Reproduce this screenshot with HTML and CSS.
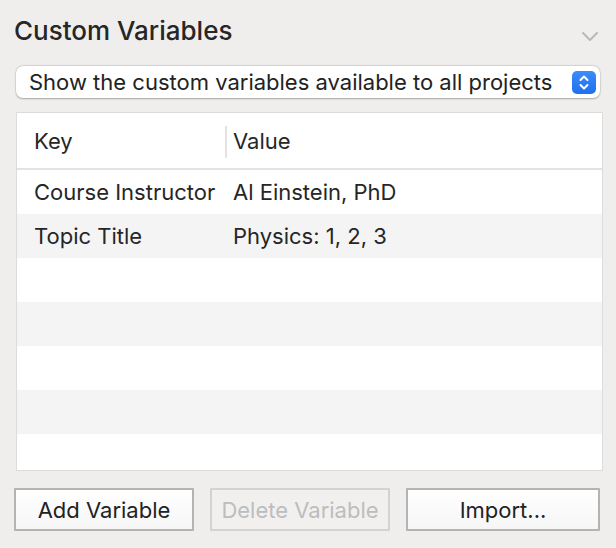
FILE: index.html
```html
<!DOCTYPE html>
<html>
<head>
<meta charset="utf-8">
<link rel="stylesheet" href="styles.css">
</head>
<body>
<div class="panel">
  <div class="head">
    <h1 class="title">Custom Variables</h1>
    <svg class="chev" width="18" height="11" viewBox="0 0 18 11"><path d="M2 2 L9 9 L16 2" fill="none" stroke="#b9b9b9" stroke-width="2" stroke-linecap="round" stroke-linejoin="round"/></svg>
  </div>
  <div class="select">
    <span class="select-text">Show the custom variables available to all projects</span>
    <span class="stepper">
      <svg width="24" height="23" viewBox="0 0 24 23"><path d="M8.5 9 L12 5.5 L15.5 9" fill="none" stroke="#fff" stroke-width="2" stroke-linecap="round" stroke-linejoin="round"/><path d="M8.5 14 L12 17.5 L15.5 14" fill="none" stroke="#fff" stroke-width="2" stroke-linecap="round" stroke-linejoin="round"/></svg>
    </span>
  </div>
  <div class="table">
    <div class="thead">
      <div class="cell key">Key</div>
      <div class="cell val"><span class="divider"></span>Value</div>
    </div>
    <div class="row"><div class="cell key">Course Instructor</div><div class="cell val">Al Einstein, PhD</div></div>
    <div class="row alt"><div class="cell key">Topic Title</div><div class="cell val">Physics: 1, 2, 3</div></div>
    <div class="row"></div>
    <div class="row alt"></div>
    <div class="row"></div>
    <div class="row alt"></div>
    <div class="row last"></div>
  </div>
  <div class="buttons">
    <button class="btn add">Add Variable</button>
    <button class="btn del" disabled>Delete Variable</button>
    <button class="btn imp">Import...</button>
  </div>
</div>
</body>
</html>
```
FILE: styles.css
```css
html, body {
  margin: 0;
  padding: 0;
  background: #efeeed;
  width: 616px;
  height: 548px;
  overflow: hidden;
  font-family: Inter, "Liberation Sans", sans-serif;
  color: #262626;
}
.panel {
  padding: 0 0 0 14px;
}
.head {
  display: flex;
  align-items: center;
  justify-content: space-between;
  height: 66px;
  padding-right: 17px;
}
.title {
  margin: 0 0 5px 0;
  font-size: 26px;
  font-weight: 500;
  color: #262626;
}
.chev {
  margin-top: 6px;
}
.select {
  margin-left: 2px;
  width: 584px;
  height: 32px;
  background: #fff;
  border-radius: 7px;
  box-shadow: 0 0.5px 2px rgba(0,0,0,0.28), 0 0 0 0.5px rgba(0,0,0,0.08);
  display: flex;
  align-items: center;
  justify-content: space-between;
  box-sizing: border-box;
  padding: 0 4px 0 13px;
}
.select-text {
  font-size: 22px;
  color: #222;
}
.stepper {
  width: 24px;
  height: 23px;
  border-radius: 5px;
  background: linear-gradient(#3c8cf8, #1f6ff0);
  display: flex;
}
.table {
  margin-top: 14px;
  margin-left: 2px;
  width: 587px;
  height: 359px;
  box-sizing: border-box;
  background: #fff;
  border: 1px solid #dddcdb;
  overflow: hidden;
}
.thead {
  display: flex;
  height: 55px;
  border-bottom: 2px solid #e3e3e3;
  align-items: center;
}
.row {
  display: flex;
  height: 44px;
  align-items: center;
}
.row.alt { background: #f4f4f4; }
.cell {
  font-size: 22px;
  color: #262626;
  white-space: nowrap;
}
.key {
  width: 191px;
  padding-left: 17px;
}
.val {
  position: relative;
  padding-left: 8px;
}
.divider {
  position: absolute;
  left: 0;
  top: -2px;
  width: 2px;
  height: 32px;
  background: #e3e3e3;
}
.buttons {
  display: flex;
  gap: 16px;
  margin-top: 17px;
}
.btn {
  height: 43px;
  box-sizing: border-box;
  border: 2px solid #b3b3b3;
  background: linear-gradient(#ffffff, #f6f6f6);
  font-family: Inter, "Liberation Sans", sans-serif;
  font-size: 22px;
  color: #222;
  padding: 0;
  border-radius: 1px;
}
.add { width: 180px; }
.del {
  width: 180px;
  border-color: #d2d2d2;
  background: #f1f0ef;
  color: #bdbdbd;
}
.imp { width: 194px; }
```
